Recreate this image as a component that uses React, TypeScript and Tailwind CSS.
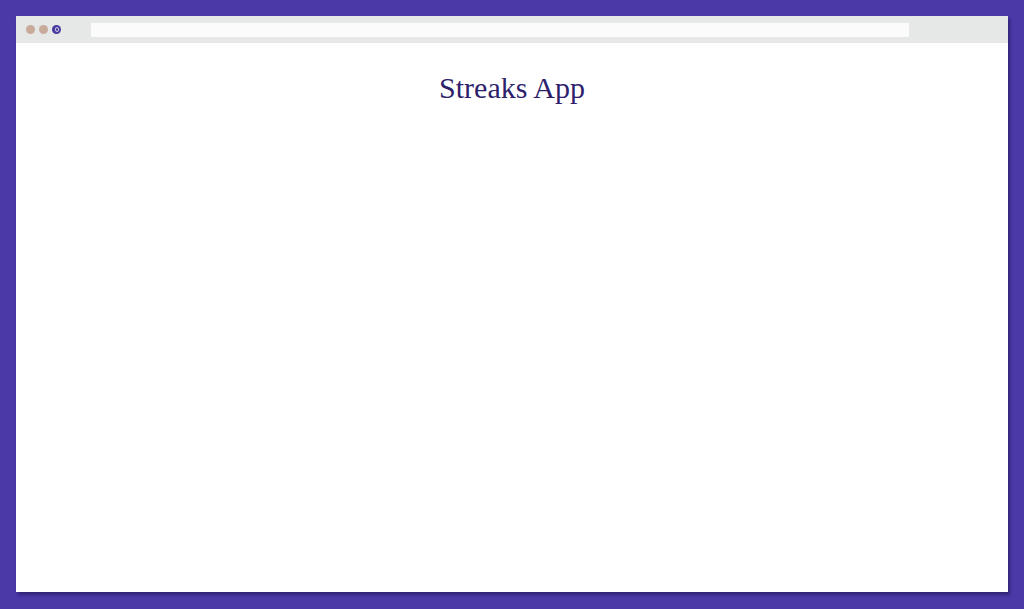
import React from 'react';

const BrowserBar = () => (
  <div className="flex items-center h-[27px] bg-[#e6e7e7] shrink-0">
    <div className="flex items-center gap-[4px] pl-[10px] w-[75px]">
      <span className="w-[9px] h-[9px] rounded-full bg-[#c9ab9b]"></span>
      <span className="w-[9px] h-[9px] rounded-full bg-[#c9ab9b]"></span>
      <span className="w-[9px] h-[9px] rounded-full bg-[#4b3a9e] flex items-center justify-center">
        <span className="w-[4px] h-[5px] rounded-full border border-white/70"></span>
      </span>
    </div>
    <div className="h-[14px] w-[818px] bg-[#fbfbfb]"></div>
  </div>
);

export default function App() {
  return (
    <div className="w-[1024px] h-[609px] bg-[#4b39a7] pt-[16px] pl-[16px]">
      <div className="w-[992px] h-[576px] bg-white flex flex-col shadow-[2px_3px_3px_rgba(30,20,80,0.55)]">
        <BrowserBar />
        <div className="flex justify-center pt-[30px]">
          <h1 className="text-[30px] leading-none text-[#2e1f6c] font-['Liberation_Serif',serif]">Streaks App</h1>
        </div>
      </div>
    </div>
  );
}
